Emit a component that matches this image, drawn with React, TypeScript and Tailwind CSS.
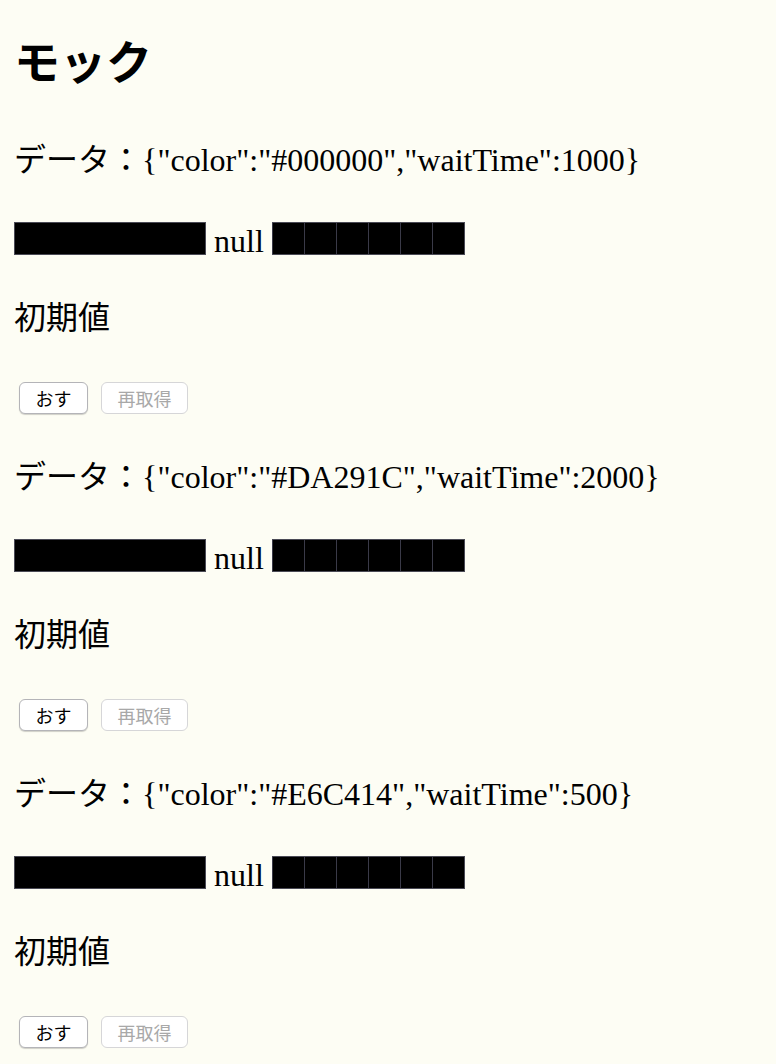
import React from "react";

const groups = [
  { data: '{"color":"#000000","waitTime":1000}' },
  { data: '{"color":"#DA291C","waitTime":2000}' },
  { data: '{"color":"#E6C414","waitTime":500}' },
];

function Group({ data }: { data: string }) {
  return (
    <div className="flex flex-col">
      <p className="h-[52px] pt-[5px] leading-[47px] text-[32px] whitespace-nowrap">
        データ：{data}
      </p>
      <div className="mt-[38px] flex h-[33px] items-start gap-[8px]">
        <div className="h-[33px] w-[192px] border border-[#4a4a55] bg-black" />
        <span className="h-[33px] pt-[5px] leading-[28px] text-[32px]">null</span>
        <div className="flex h-[33px] border-y border-r border-[#4a4a55]">
          {[0, 1, 2, 3, 4, 5].map((i) => (
            <div key={i} className="h-full w-[32px] border-l border-[#3a3a48] bg-black" />
          ))}
        </div>
      </div>
      <p className="mt-[34px] h-[53px] pt-[6px] leading-[47px] text-[32px]">初期値</p>
      <div className="ml-[5px] mt-[40px] flex gap-[13px] font-['Noto_Sans_CJK_JP',sans-serif] text-[18px]">
        <button className="flex h-[32px] w-[69px] items-center justify-center rounded-[6px] border border-[#b4b4b8] bg-white leading-none text-black shadow-[0_1px_1px_rgba(0,0,0,0.18)]">
          おす
        </button>
        <button
          disabled
          className="flex h-[32px] w-[87px] items-center justify-center rounded-[6px] border border-[#d6d6d8] bg-white leading-none text-[#a8a8a8]"
        >
          再取得
        </button>
      </div>
    </div>
  );
}

export default function App() {
  return (
    <div className="min-h-screen bg-[#fdfdf4] px-[14px] pt-[29px] font-['Liberation_Serif','Noto_Sans_CJK_JP',serif] text-black">
      <h1 className="h-[60px] font-['Noto_Sans_CJK_JP',sans-serif] text-[46px] font-bold leading-[60px]">
        モック
      </h1>
      <div className="mt-[43px] flex flex-col gap-[35px]">
        {groups.map((g, i) => (
          <Group key={i} data={g.data} />
        ))}
      </div>
    </div>
  );
}
